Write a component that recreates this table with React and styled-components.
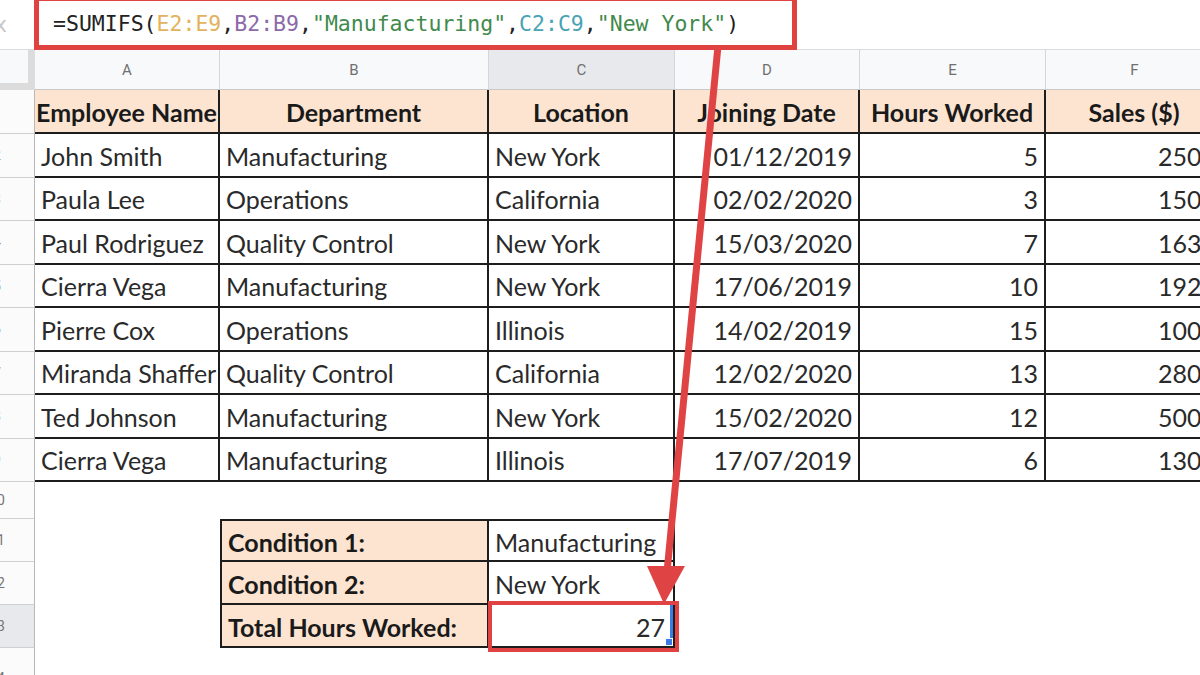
import React from 'react';
import styled, { createGlobalStyle, css } from 'styled-components';

const Global = createGlobalStyle`
  html, body { margin: 0; padding: 0; background: #fff; }
  body { width: 1200px; height: 675px; overflow: hidden; font-family: Lato, "Open Sans", sans-serif; }
`;

const Page = styled.div`
  position: relative;
  width: 1200px;
  height: 675px;
  overflow: hidden;
  background: #fff;
  display: flex;
  flex-direction: column;
`;

const FormulaBar = styled.div`
  display: flex;
  height: 50px;
  flex: none;
  box-sizing: border-box;
  border-bottom: 1px solid #dadce0;
`;

const FxCell = styled.div`
  width: 34px;
  flex: none;
  overflow: hidden;
  display: flex;
  align-items: center;
  color: #c8c8c8;
  font: 22px "DejaVu Sans", sans-serif;
  span { margin-left: -6px; }
`;

const FormulaBox = styled.div`
  width: 763px;
  height: 54px;
  margin-top: -4px;
  box-sizing: border-box;
  border: 5px solid #e0423f;
  display: flex;
  align-items: center;
  padding-left: 14px;
  font: 21.5px "DejaVu Sans Mono", monospace;
  color: #222;
  white-space: pre;
  background: #fff;
`;

const Tok = styled.span`
  color: ${p => p.$c || '#222'};
`;

const Sheet = styled.div`
  display: grid;
  grid-template-columns: 35px 185px 269px 186px 185px 186px 178px;
  grid-template-rows: 40px 44px repeat(8, 43.5px) 37px 43px 43px 43px 60px;
`;

const Corner = styled.div`
  box-sizing: border-box;
  background: #f8f9fa;
  border-right: 7px solid #dcdcdc;
  border-bottom: 7px solid #dcdcdc;
`;

const ColHead = styled.div`
  box-sizing: border-box;
  background: ${p => (p.$active ? '#e7e9ec' : '#f8f9fa')};
  border-right: 1px solid #d6d6d6;
  border-bottom: 1px solid #c8c8c8;
  display: flex;
  align-items: center;
  justify-content: center;
  font: 15px Roboto, "Liberation Sans", sans-serif;
  color: #707070;
`;

const RowHead = styled.div`
  box-sizing: border-box;
  background: ${p => (p.$active ? '#e7e9ec' : '#fbfbfb')};
  border-right: 1px solid #b8b8b8;
  border-bottom: 1px solid #cfcfcf;
  overflow: hidden;
  display: flex;
  align-items: center;
  font: 14px Roboto, "Liberation Sans", sans-serif;
  color: #757575;
`;

const RowNum = styled.span`
  flex: none;
  width: 22px;
  margin-left: -14px;
  text-align: center;
`;

const line = '2px solid #1d1d1d';

const Cell = styled.div`
  position: relative;
  box-sizing: border-box;
  display: flex;
  align-items: center;
  justify-content: ${p =>
    p.$align === 'right' ? 'flex-end' : p.$align === 'center' ? 'center' : 'flex-start'};
  padding: 2px 6px 0 6px;
  overflow: hidden;
  white-space: nowrap;
  font-family: Lato, "Open Sans", sans-serif;
  font-size: 25px;
  font-weight: ${p => (p.$head ? 700 : 400)};
  color: ${p => (p.$head ? '#1a1a1a' : '#2a2a2a')};
  background: ${p => (p.$head ? '#fce4d1' : '#fff')};
  ${p => p.$boxed && css`border-right: ${line}; border-bottom: ${line};`}
  ${p => p.$top && css`border-top: ${line};`}
  ${p => p.$left && css`border-left: ${line};`}
  ${p => p.$selected && css`
    padding-right: 8px;
    box-shadow: inset -3px 0 0 #3b7be6;
    &::after {
      content: '';
      position: absolute;
      right: 0;
      bottom: 0;
      width: 6px;
      height: 6px;
      background: #3b7be6;
      border: 1px solid #fff;
    }
  `}
`;

const Overlay = styled.svg`
  position: absolute;
  left: 0;
  top: 0;
  pointer-events: none;
`;

const cols = ['A', 'B', 'C', 'D', 'E', 'F'];
const headers = ['Employee Name', 'Department', 'Location', 'Joining Date', 'Hours Worked', 'Sales ($)'];
const rows = [
  ['John Smith', 'Manufacturing', 'New York', '01/12/2019', '5', '2500'],
  ['Paula Lee', 'Operations', 'California', '02/02/2020', '3', '1500'],
  ['Paul Rodriguez', 'Quality Control', 'New York', '15/03/2020', '7', '1637'],
  ['Cierra Vega', 'Manufacturing', 'New York', '17/06/2019', '10', '1923'],
  ['Pierre Cox', 'Operations', 'Illinois', '14/02/2019', '15', '1000'],
  ['Miranda Shaffer', 'Quality Control', 'California', '12/02/2020', '13', '2804'],
  ['Ted Johnson', 'Manufacturing', 'New York', '15/02/2020', '12', '5000'],
  ['Cierra Vega', 'Manufacturing', 'Illinois', '17/07/2019', '6', '1300'],
];
const aligns = ['left', 'left', 'left', 'right', 'right', 'right'];
const conditions = [
  ['Condition 1:', 'Manufacturing', 'left'],
  ['Condition 2:', 'New York', 'left'],
  ['Total Hours Worked:', '27', 'right'],
];

const RED = '#e04343';

export default function App() {
  return (
    <Page>
      <Global />
      <FormulaBar>
        <FxCell><span>x</span></FxCell>
        <FormulaBox>
          <Tok>=SUMIFS(</Tok>
          <Tok $c="#e3b25c">E2:E9</Tok>
          <Tok>,</Tok>
          <Tok $c="#8c6aa9">B2:B9</Tok>
          <Tok>,</Tok>
          <Tok $c="#3f8a4c">"Manufacturing"</Tok>
          <Tok>,</Tok>
          <Tok $c="#4aa3b5">C2:C9</Tok>
          <Tok>,</Tok>
          <Tok $c="#3f8a4c">"New York"</Tok>
          <Tok>)</Tok>
        </FormulaBox>
      </FormulaBar>
      <Sheet>
        <Corner />
        {cols.map(c => (
          <ColHead key={c} $active={c === 'C'}>{c}</ColHead>
        ))}

        <RowHead><RowNum>1</RowNum></RowHead>
        {headers.map(h => (
          <Cell key={h} $head $boxed $align="center">{h}</Cell>
        ))}

        {rows.map((r, ri) => (
          <React.Fragment key={ri}>
            <RowHead><RowNum>{ri + 2}</RowNum></RowHead>
            {r.map((v, ci) => (
              <Cell key={ci} $boxed $align={aligns[ci]}>{v}</Cell>
            ))}
          </React.Fragment>
        ))}

        <RowHead><RowNum>10</RowNum></RowHead>
        {cols.map(c => <Cell key={c} />)}

        {conditions.map(([label, value, align], i) => (
          <React.Fragment key={label}>
            <RowHead $active={i === 2}><RowNum>{11 + i}</RowNum></RowHead>
            <Cell />
            <Cell $head $boxed $left $top={i === 0}>{label}</Cell>
            <Cell $boxed $top={i === 0} $align={align} $selected={i === 2}>{value}</Cell>
            <Cell />
            <Cell />
            <Cell />
          </React.Fragment>
        ))}

        <RowHead><RowNum>14</RowNum></RowHead>
        {cols.map(c => <Cell key={c} />)}
      </Sheet>

      <Overlay width="1200" height="675" viewBox="0 0 1200 675">
        <line x1="718" y1="46" x2="667" y2="572" stroke={RED} strokeWidth="7" />
        <polygon points="647,566 685,566 664,604" fill={RED} />
        <rect x="490" y="603" width="187" height="47" fill="none" stroke={RED} strokeWidth="4" />
      </Overlay>
    </Page>
  );
}
